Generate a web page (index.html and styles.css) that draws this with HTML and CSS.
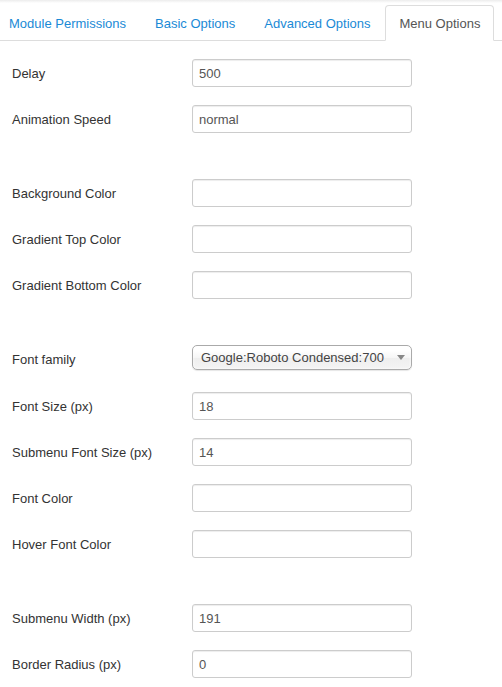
FILE: index.html
```html
<!DOCTYPE html>
<html>
<head>
<meta charset="utf-8">
<link rel="stylesheet" href="styles.css">
</head>
<body>
<div class="tabbar">
  <ul class="tabs">
    <li class="tab"><a href="#">Module Permissions</a></li>
    <li class="tab"><a href="#">Basic Options</a></li>
    <li class="tab"><a href="#">Advanced Options</a></li>
    <li class="tab active"><a href="#">Menu Options</a></li>
  </ul>
</div>
<div class="panel">
  <div class="group">
    <div class="row"><label>Delay</label><input class="field" type="text" value="500"></div>
    <div class="row"><label>Animation Speed</label><input class="field" type="text" value="normal"></div>
  </div>
  <div class="group">
    <div class="row"><label>Background Color</label><input class="field" type="text" value=""></div>
    <div class="row"><label>Gradient Top Color</label><input class="field" type="text" value=""></div>
    <div class="row"><label>Gradient Bottom Color</label><input class="field" type="text" value=""></div>
  </div>
  <div class="group">
    <div class="row row-select"><label>Font family</label>
      <div class="chosen"><span class="chosen-text">Google:Roboto Condensed:700</span><span class="chosen-arrow"></span></div>
    </div>
    <div class="row"><label>Font Size (px)</label><input class="field" type="text" value="18"></div>
    <div class="row"><label>Submenu Font Size (px)</label><input class="field" type="text" value="14"></div>
    <div class="row"><label>Font Color</label><input class="field" type="text" value=""></div>
    <div class="row"><label>Hover Font Color</label><input class="field" type="text" value=""></div>
  </div>
  <div class="group">
    <div class="row"><label>Submenu Width (px)</label><input class="field" type="text" value="191"></div>
    <div class="row"><label>Border Radius (px)</label><input class="field" type="text" value="0"></div>
  </div>
</div>
</body>
</html>
```

FILE: styles.css
```css
html, body {
  margin: 0;
  padding: 0;
  background: #fff;
}
body {
  font-family: "Liberation Sans", Arial, sans-serif;
  font-size: 13px;
  color: #333;
}
.tabbar {
  background: linear-gradient(#ececec, #fff 3px);
  padding-top: 5px;
}
.tabs {
  list-style: none;
  margin: 0;
  padding: 0;
  display: flex;
  border-bottom: 1px solid #ddd;
}
.tab {
  margin-bottom: -1px;
  margin-right: 1px;
}
.tab:first-child {
  margin-left: -5px;
}
.tab a {
  display: block;
  padding: 8px 13px 6px;
  line-height: 20px;
  border: 1px solid transparent;
  border-radius: 4px 4px 0 0;
  color: #1a8ad6;
  text-decoration: none;
}
.tab.active a {
  color: #555;
  background: #fff;
  border-color: #ddd #ddd transparent;
}
.panel {
  padding: 18px 0 0 12px;
}
.group {
  padding-bottom: 28px;
}
.group:last-child {
  padding-bottom: 0;
}
.row {
  display: grid;
  grid-template-columns: 180px 220px;
  align-items: center;
  height: 28px;
  margin-bottom: 18px;
}
.row-select {
  margin-bottom: 19px;
}
.group:last-child .row:last-child {
  margin-bottom: 9px;
}
.row label {
  color: #333;
}
.field {
  box-sizing: border-box;
  width: 220px;
  height: 28px;
  margin: 0;
  padding: 4px 6px;
  font-family: "Liberation Sans", Arial, sans-serif;
  font-size: 13px;
  line-height: 18px;
  color: #555;
  border: 1px solid #ccc;
  border-radius: 3px;
  box-shadow: inset 0 1px 1px rgba(0,0,0,0.075);
  background: #fff;
  outline: none;
}
.chosen {
  box-sizing: border-box;
  align-self: start;
  width: 220px;
  height: 25px;
  display: flex;
  align-items: center;
  justify-content: space-between;
  padding: 0 6px 0 8px;
  border: 1px solid #aaa;
  border-radius: 5px;
  background: linear-gradient(#fff 20%, #f6f6f6 50%, #eee 52%, #f4f4f4 100%);
  box-shadow: inset 0 0 3px #fff, 0 1px 1px rgba(0,0,0,0.1);
  color: #444;
}
.chosen-arrow {
  width: 0;
  height: 0;
  border-left: 4px solid transparent;
  border-right: 4px solid transparent;
  border-top: 5px solid #888;
}
```
